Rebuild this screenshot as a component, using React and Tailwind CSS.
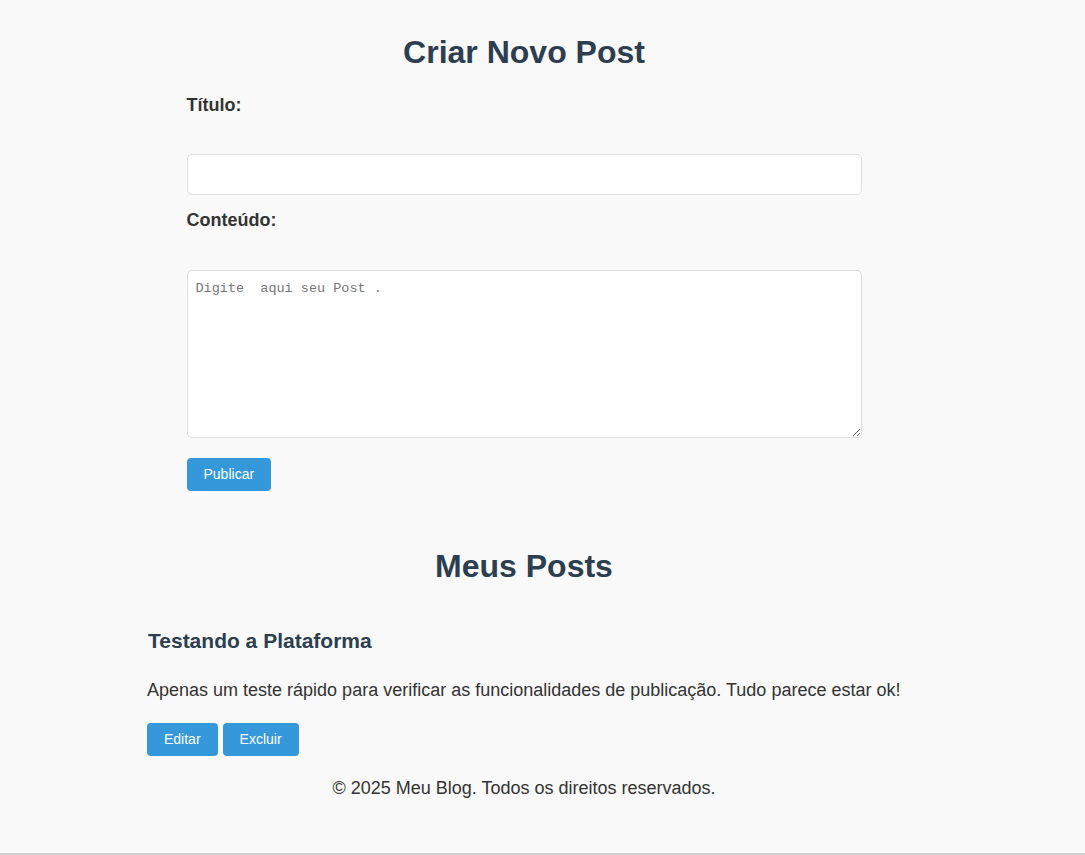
import { useState } from 'react';

function App() {
  const [titulo, setTitulo] = useState('');
  const [conteudo, setConteudo] = useState('');

  const posts = [
    {
      id: 1,
      title: 'Testando a Plataforma',
      body: 'Apenas um teste rápido para verificar as funcionalidades de publicação. Tudo parece estar ok!',
    },
  ];

  return (
    <div
      className="h-[855px] bg-[#f9f9f9] border-b-2 border-[#cfcfcf] text-[#333] overflow-hidden"
      style={{ fontFamily: '"Liberation Sans", Arial, sans-serif' }}
    >
      <div className="w-[800px] ml-[124px] pt-[34px]">
        {/* formulario */}
        <h1 className="text-center text-[32px] leading-[36px] font-bold text-[#2c3e50]">Criar Novo Post</h1>
        <form className="w-[675px] mx-auto mt-[24px]" onSubmit={(e) => e.preventDefault()}>
          <label className="block text-[18px] leading-[22px] font-bold text-[#333]">Título:</label>
          <input
            type="text"
            value={titulo}
            onChange={(e) => setTitulo(e.target.value)}
            className="block w-full h-[41px] mt-[38px] px-[10px] bg-white border border-[#ddd] rounded-[5px] outline-none"
          />
          <label className="block mt-[14px] text-[18px] leading-[22px] font-bold text-[#333]">Conteúdo:</label>
          <textarea
            value={conteudo}
            onChange={(e) => setConteudo(e.target.value)}
            placeholder="Digite  aqui seu Post ."
            className="block w-full h-[168px] mt-[39px] px-[8px] pt-[10px] pb-[9px] bg-white border border-[#ddd] rounded-[5px] outline-none resize-y text-[13.5px] leading-[16px] placeholder:text-[#777]"
            style={{ fontFamily: '"Liberation Mono", monospace' }}
          />
          <button
            type="submit"
            className="mt-[20px] h-[33px] px-[17px] bg-[#3498db] text-white text-[14px] rounded-[4px]"
          >
            Publicar
          </button>
        </form>

        {/* lista de posts */}
        <h2 className="mt-[57px] text-center text-[32px] leading-[36px] font-bold text-[#2c3e50]">Meus Posts</h2>
        <div className="px-[23px] mt-[45px]">
          {posts.map((post) => (
            <div key={post.id}>
              <h3 className="text-[21px] leading-[24px] font-bold text-[#2c3e50] pl-[1px]">{post.title}</h3>
              <p className="mt-[26px] text-[18px] leading-[22px] whitespace-nowrap">{post.body}</p>
              <div className="mt-[22px] flex gap-[5px]">
                <button className="h-[33px] px-[17px] bg-[#3498db] text-white text-[14px] rounded-[4px]">Editar</button>
                <button className="h-[33px] px-[17px] bg-[#3498db] text-white text-[14px] rounded-[4px]">Excluir</button>
              </div>
            </div>
          ))}
        </div>

        <footer className="mt-[21px] text-center text-[18px] leading-[22px]">
          © 2025 Meu Blog. Todos os direitos reservados.
        </footer>
      </div>
    </div>
  );
}

export default App;
